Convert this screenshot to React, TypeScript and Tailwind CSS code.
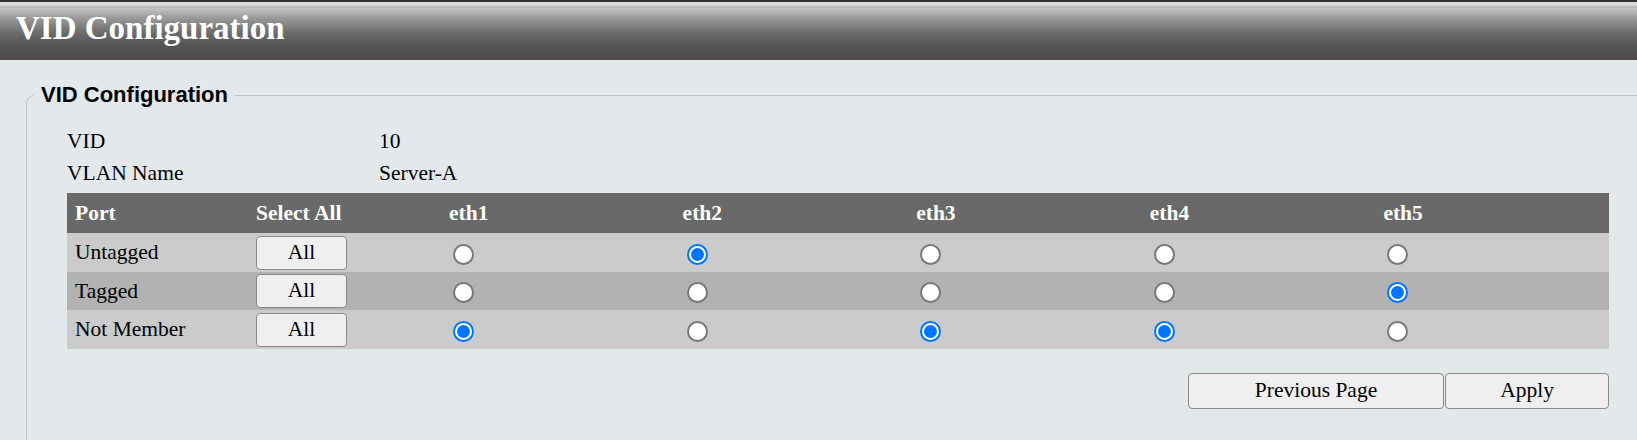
import React from "react";

const serif = "font-['Liberation_Serif','Times_New_Roman',serif]";

function Radio({ checked }: { checked: boolean }) {
  if (checked) {
    return (
      <span className="ml-[4px] mt-[3px] flex h-[21px] w-[21px] items-center justify-center rounded-full border-[2px] border-[#0075ff] bg-white">
        <span className="h-[13px] w-[13px] rounded-full bg-[#0075ff]" />
      </span>
    );
  }
  return (
    <span className="ml-[4px] mt-[3px] block h-[21px] w-[21px] rounded-full border-[2px] border-[#787878] bg-white" />
  );
}

const ports = ["eth1", "eth2", "eth3", "eth4", "eth5"];
const rows: { label: string; bg: string; h: string; sel: boolean[] }[] = [
  { label: "Untagged", bg: "bg-[#cbcbcb]", h: "h-[39px]", sel: [false, true, false, false, false] },
  { label: "Tagged", bg: "bg-[#b2b2b2]", h: "h-[38px]", sel: [false, false, false, false, true] },
  { label: "Not Member", bg: "bg-[#cbcbcb]", h: "h-[39px]", sel: [true, false, true, true, false] },
];

const gridCols = "grid grid-cols-[181px_193px_repeat(5,1fr)]";

export default function App() {
  return (
    <div className={`h-[440px] w-[1637px] overflow-hidden bg-[#e3e8eb] ${serif}`}>
      <header className="flex h-[60px] items-center bg-[linear-gradient(to_bottom,#333_0px,#333_2px,#dedede_2px,#d6d6d6_6px,#a9a9a9_7px,#c6c6c6_8px,#9a9a9a_18px,#6e6e6e_32px,#565656_44px,#4f4f4f_52px,#4e4e4e_60px)] pb-[4px] pl-[16px]">
        <h1 className="text-[33px] font-bold leading-none text-white">VID Configuration</h1>
      </header>
      <div className="pl-[26px] pt-[22px]">
        <fieldset className="w-[1700px] rounded-tl-[8px] border border-[#b7c8c8] px-[7px] pb-[60px]">
          <legend className="px-[7px] font-['Liberation_Sans',Arial,sans-serif] text-[22px] font-bold leading-[26px] text-black">
            VID Configuration
          </legend>
          <div className="ml-[33px] mt-[17px] w-[1542px] text-[21.5px] text-black">
            <div className="grid h-[32px] grid-cols-[312px_1fr] items-center">
              <span>VID</span>
              <span>10</span>
            </div>
            <div className="grid h-[32px] grid-cols-[312px_1fr] items-center">
              <span>VLAN Name</span>
              <span>Server-A</span>
            </div>
            <div className="mt-[4px]">
              <div className={`${gridCols} h-[40px] bg-[#696969] font-bold text-white`}>
                <div className="flex items-center px-[8px]">Port</div>
                <div className="flex items-center px-[8px]">Select All</div>
                {ports.map((p) => (
                  <div key={p} className="flex items-center px-[8px]">
                    {p}
                  </div>
                ))}
              </div>
              {rows.map((r) => (
                <div key={r.label} className={`${gridCols} ${r.h} ${r.bg}`}>
                  <div className="flex items-center px-[8px]">{r.label}</div>
                  <div className="flex items-center px-[8px]">
                    <button className="h-[34px] w-[91px] rounded-[4px] border border-[#8a8a8a] bg-[#efefef] text-[21.5px] leading-none text-black">
                      All
                    </button>
                  </div>
                  {r.sel.map((s, i) => (
                    <div key={i} className="flex items-center px-[8px]">
                      <Radio checked={s} />
                    </div>
                  ))}
                </div>
              ))}
            </div>
            <div className="mt-[24px] flex justify-end gap-[1px]">
              <button className="h-[36px] w-[256px] rounded-[4px] border border-[#8a8a8a] bg-[#efefef] text-[21.5px] leading-none text-black">
                Previous Page
              </button>
              <button className="h-[36px] w-[164px] rounded-[4px] border border-[#8a8a8a] bg-[#efefef] text-[21.5px] leading-none text-black">
                Apply
              </button>
            </div>
          </div>
        </fieldset>
      </div>
    </div>
  );
}
